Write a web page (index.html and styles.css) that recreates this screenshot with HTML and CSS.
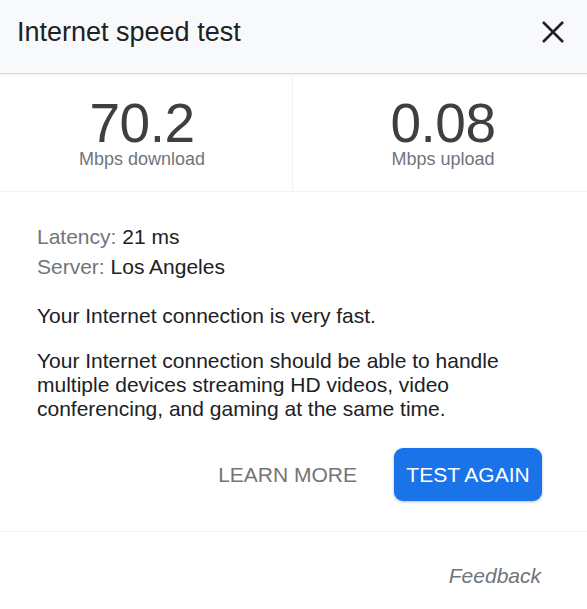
FILE: index.html
```html
<!DOCTYPE html>
<html lang="en">
<head>
<meta charset="utf-8">
<title>Internet speed test</title>
<link rel="stylesheet" href="styles.css">
</head>
<body>
<div class="card">
  <header class="head">
    <h1 class="title">Internet speed test</h1>
    <button class="close" aria-label="Close">
      <svg width="24" height="24" viewBox="0 0 24 24"><path d="M2 2 L22 22 M22 2 L2 22" stroke="#202124" stroke-width="2.6" fill="none"/></svg>
    </button>
  </header>
  <section class="stats">
    <div class="stat">
      <div class="num">70.2</div>
      <div class="unit">Mbps download</div>
    </div>
    <div class="stat">
      <div class="num">0.08</div>
      <div class="unit">Mbps upload</div>
    </div>
  </section>
  <section class="body">
    <div class="meta"><span class="lbl">Latency:</span> 21 ms</div>
    <div class="meta"><span class="lbl">Server:</span> Los Angeles</div>
    <p class="summary">Your Internet connection is very fast.</p>
    <p class="detail">Your Internet connection should be able to handle multiple devices streaming HD videos, video conferencing, and gaming at the same time.</p>
    <div class="actions">
      <button class="learn">LEARN MORE</button>
      <button class="again">TEST AGAIN</button>
    </div>
  </section>
  <footer class="foot">
    <span class="feedback">Feedback</span>
  </footer>
</div>
</body>
</html>
```

FILE: styles.css
```css
* { box-sizing: border-box; }
html, body { margin: 0; padding: 0; background: #fff; }
body {
  font-family: "Liberation Sans", Arial, sans-serif;
  color: #202124;
  width: 587px;
}
.card { width: 587px; }
.head {
  height: 74px;
  background: #f8f9fa;
  border-bottom: 1px solid #dadce0;
  box-shadow: 0 1px 1px rgba(0,0,0,0.06);
  display: flex;
  align-items: center;
  justify-content: space-between;
  padding: 0 22px 9px 17px;
}
.title {
  margin: 0;
  font-size: 27px;
  font-weight: normal;
  color: #202124;
}
.close {
  border: 0;
  background: none;
  padding: 0;
  width: 24px;
  height: 24px;
  display: flex;
}
.stats {
  display: grid;
  grid-template-columns: 293px 1fr;
  border-bottom: 1px solid #f1f3f4;
}
.stat {
  display: flex;
  flex-direction: column;
  align-items: center;
  padding: 24px 0 21px;
}
.stat:first-child { border-right: 1px solid #f1f3f4; padding-right: 8px; }
.stat:last-child { padding-left: 6px; }
.num {
  font-size: 55px;
  line-height: 50px;
  color: #3c4043;
  letter-spacing: -0.5px;
}
.unit {
  font-size: 18px;
  line-height: 22px;
  color: #70757a;
}
.body {
  padding: 30px 45px 30px 37px;
  border-bottom: 1px solid #f1f3f4;
  font-size: 21px;
}
.meta { line-height: 30px; }
.lbl { color: #70757a; }
.summary {
  margin: 22px 0 0;
  line-height: 24px;
}
.detail {
  margin: 21px 0 0;
  line-height: 24px;
}
.actions {
  margin-top: 27px;
  display: flex;
  justify-content: flex-end;
  align-items: center;
  gap: 37px;
}
.learn {
  border: 0;
  background: none;
  padding: 0;
  font-family: inherit;
  font-size: 21px;
  color: #757575;
}
.again {
  border: 0;
  width: 148px;
  height: 53px;
  border-radius: 9px;
  background: #1a73e8;
  color: #fff;
  font-family: inherit;
  font-size: 21px;
  box-shadow: 0 1px 3px rgba(60,64,67,0.35);
  padding: 0;
}
.foot {
  display: flex;
  justify-content: flex-end;
  padding: 32px 46px 0 0;
}
.feedback {
  font-style: italic;
  font-size: 21px;
  line-height: 24px;
  color: #70757a;
}
```
